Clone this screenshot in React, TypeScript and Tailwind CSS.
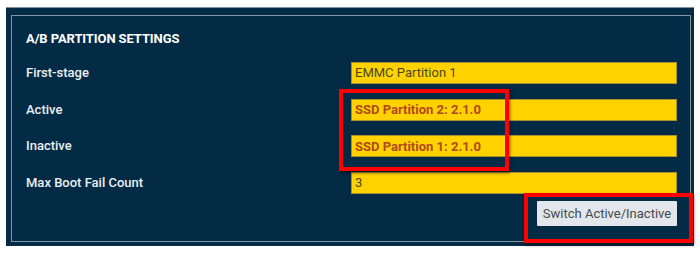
import React from "react";

const rows: { label: string; value: string; bold?: boolean }[] = [
  { label: "First-stage", value: "EMMC Partition 1" },
  { label: "Active", value: "SSD Partition 2: 2.1.0", bold: true },
  { label: "Inactive", value: "SSD Partition 1: 2.1.0", bold: true },
  { label: "Max Boot Fail Count", value: "3" },
];

export default function App() {
  return (
    <div
      className="relative w-[700px] h-[255px] bg-white overflow-hidden"
      style={{ fontFamily: "Roboto, 'Liberation Sans', sans-serif" }}
    >
      <div className="ml-[6px] mt-[7px] w-[688px] h-[239px] bg-[#032b45] border-t border-[#7f8f9e] pt-[7px] pl-[5px]">
        <div className="w-[680px] h-[227px] border border-[#8594a2] pt-[15px] pl-[14px] pr-[13px] flex flex-col">
          <div className="text-[13px] leading-[16px] font-bold text-white tracking-[-0.1px]">
            A/B PARTITION SETTINGS
          </div>
          <div className="mt-[15px] flex flex-col gap-[14.7px]">
            {rows.map((r) => (
              <div key={r.label} className="flex items-center h-[22px]">
                <div className="w-[325px] text-[13px] font-medium text-[#eceff2] leading-[16px]">
                  {r.label}
                </div>
                <div
                  className={
                    r.bold
                      ? "flex-1 h-[22px] bg-[#ffd200] border border-[#a8912a] pl-[3px] flex items-center text-[13px] font-bold text-[#b0481c]"
                      : "flex-1 h-[22px] bg-[#ffd200] border border-[#a8912a] pl-[3px] flex items-center text-[13px] text-[#4a4a1e]"
                  }
                >
                  {r.value}
                </div>
              </div>
            ))}
          </div>
          <div className="mt-[7px] flex justify-end">
            <button className="h-[25px] w-[140px] bg-[#e3e7eb] text-[#444a50] text-[13px] leading-none flex items-center justify-center rounded-[1px]">
              Switch Active/Inactive
            </button>
          </div>
        </div>
      </div>
      {/* red highlight boxes */}
      <div className="absolute left-[339px] top-[89px] w-[170px] h-[82px] border-[4px] border-[#ff0000] shadow-[1px_2px_3px_rgba(0,0,0,0.5)] pointer-events-none" />
      <div className="absolute left-[524px] top-[193px] w-[169px] h-[50px] border-[4px] border-[#ff0000] shadow-[1px_2px_3px_rgba(0,0,0,0.5)] pointer-events-none" />
    </div>
  );
}
